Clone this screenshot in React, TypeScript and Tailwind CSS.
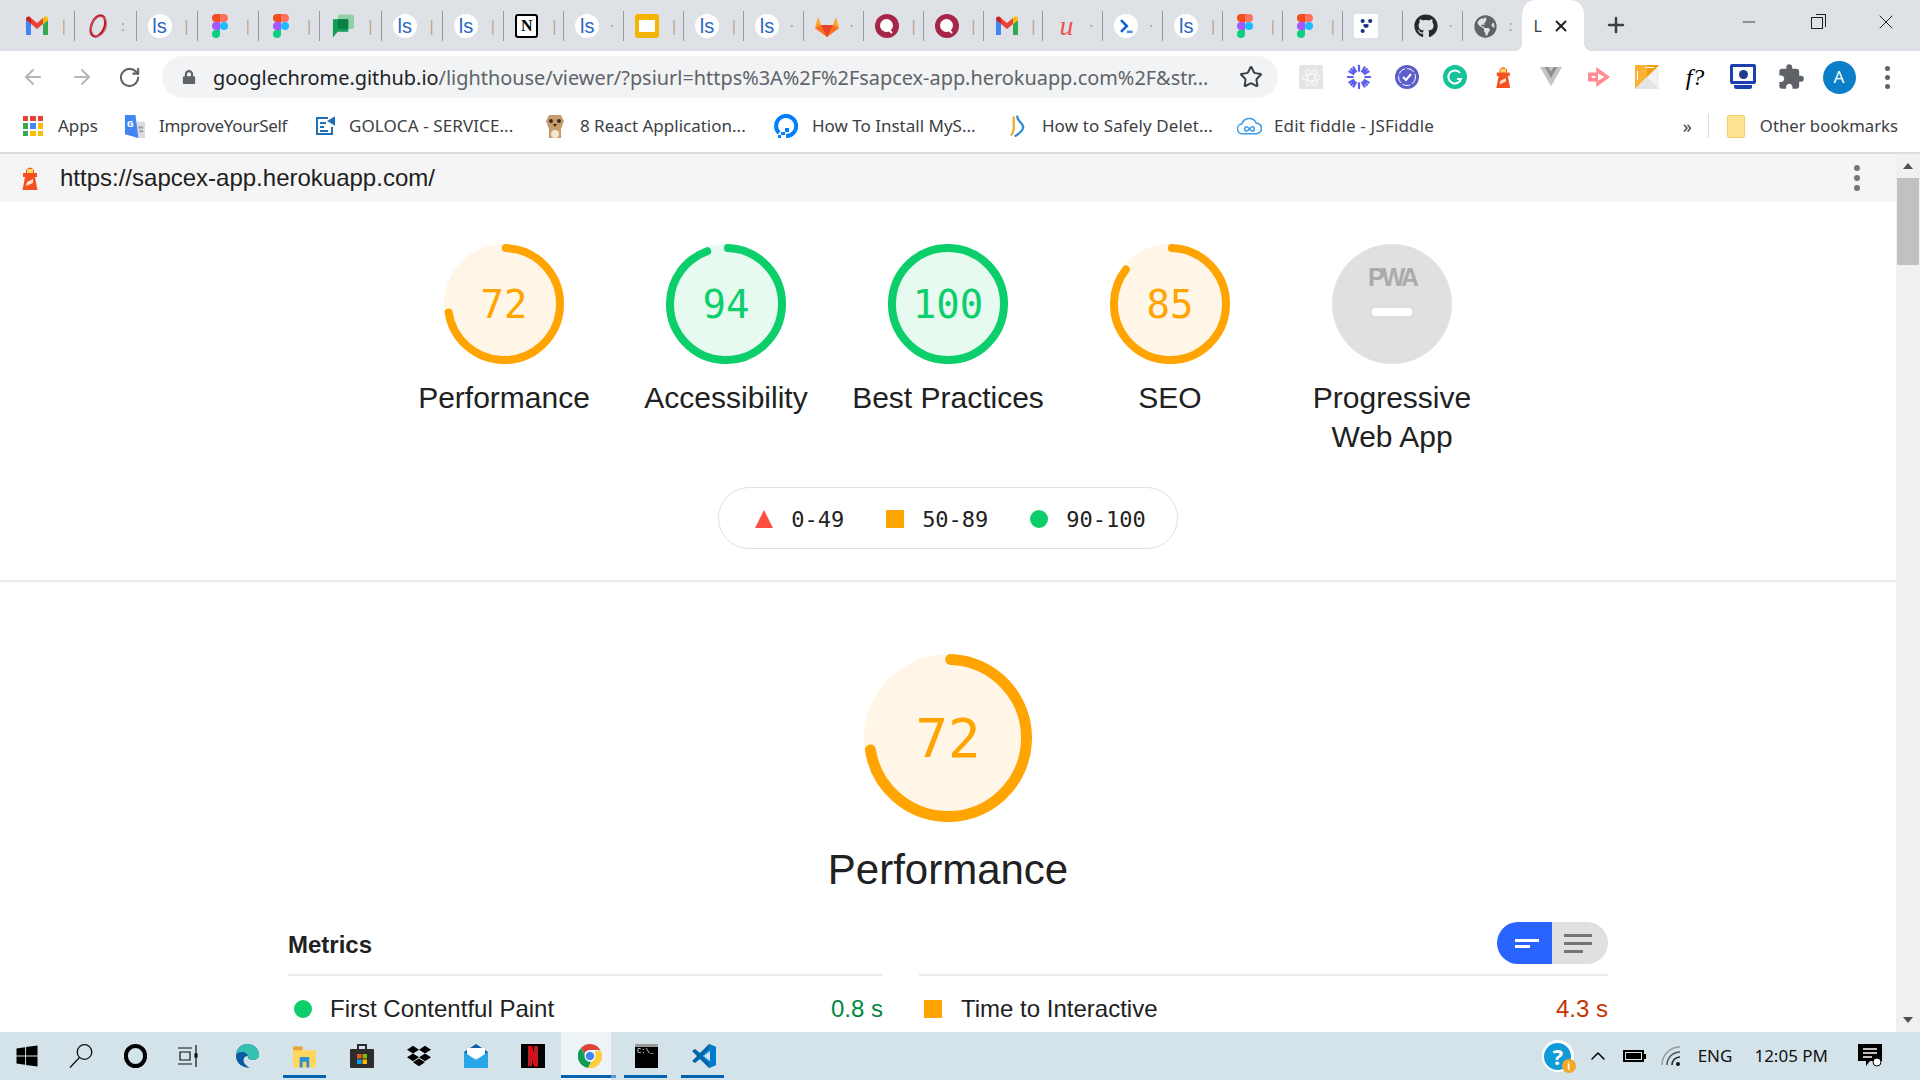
import { ArrowLeft, ArrowRight, ChevronUp, Minus, Plus, RotateCw, Star, X } from 'lucide-react';
import { FaDropbox, FaGithub, FaGlobeAmericas, FaLock, FaWindows } from 'react-icons/fa';
import { MdExtension } from 'react-icons/md';

const Gmail = () => (
  <svg viewBox="0 0 24 24" className="w-[24px] h-[24px]">
    <path fill="#4285f4" d="M1 21h5V10L1 6z" />
    <path fill="#34a853" d="M18 21h5V6l-5 4z" />
    <path fill="#ea4335" d="M6 10V4l6 5 6-5v6l-6 5z" />
    <path fill="#fbbc04" d="M18 4v6l5-4V5c0-2.500-3-3.500-5-1z" />
    <path fill="#c5221f" d="M1 6l5 4V4C4 1.500 1 2.500 1 5z" />
  </svg>
);

const Opera = () => (
  <svg viewBox="0 0 24 24" className="w-[24px] h-[24px]" fill="none">
    <ellipse cx="12" cy="12" rx="6.500" ry="11" transform="rotate(22 12 12)" stroke="#b71c2c" strokeWidth="2.400" />
    <ellipse cx="13" cy="12" rx="7.500" ry="10" transform="rotate(22 12 12)" stroke="#d9707a" strokeWidth="0.800" />
  </svg>
);

const Ls = () => (
  <div className="w-[24px] h-[24px] rounded-full bg-white flex items-center justify-center text-[20px] leading-none text-[#2b66c4] font-['Liberation_Sans',sans-serif]">
    ls
  </div>
);

const Figma = () => (
  <svg viewBox="0 0 16 24" className="w-[16px] h-[24px]">
    <path fill="#f24e1e" d="M4 0h4v8H4a4 4 0 0 1 0-8z" />
    <path fill="#ff7262" d="M8 0h4a4 4 0 0 1 0 8H8z" />
    <path fill="#a259ff" d="M4 8h4v8H4a4 4 0 0 1 0-8z" />
    <circle cx="12" cy="12" r="4" fill="#1abcfe" />
    <path fill="#0acf83" d="M4 16h4v4a4 4 0 1 1-4-4z" />
  </svg>
);

const Chat = () => (
  <svg viewBox="0 0 24 24" className="w-[23px] h-[24px]">
    <rect x="7" y="0" width="17" height="15" rx="2" fill="#8fd0a5" />
    <path fill="#0f9d58" d="M2 5h16v13H7l-5 6z" />
    <rect x="7" y="5" width="11" height="10" fill="#0b7f45" />
  </svg>
);

const Notion = () => (
  <div className="w-[23px] h-[24px] bg-white border-2 border-black rounded-[3px] flex items-center justify-center text-[16px] font-bold text-black leading-none font-['Liberation_Serif',serif]">
    N
  </div>
);

const Slides = () => (
  <div className="w-[24px] h-[24px] bg-[#f4b400] rounded-[3px] flex items-center justify-center">
    <div className="w-[16px] h-[12px] bg-white" />
  </div>
);

const Gitlab = () => (
  <svg viewBox="0 0 24 24" className="w-[24px] h-[24px]">
    <path fill="#fca326" d="M0 14L3 3l3 8h12l3-8 3 11-12 9z" />
    <path fill="#fc6d26" d="M6 11h12l-6 12zM0 14l6-3 6 12zM24 14l-6-3-6 12z" />
    <path fill="#e24329" d="M6 11h12l-6 12z" />
  </svg>
);

const Quora = () => (
  <svg viewBox="0 0 24 24" className="w-[24px] h-[24px]">
    <circle cx="12" cy="12" r="12" fill="#a8254a" />
    <circle cx="11.500" cy="11.500" r="6.500" fill="#fff" />
    <path d="M12 14l5 5" stroke="#fff" strokeWidth="2" />
  </svg>
);

const Udemy = () => (
  <div className="w-[24px] h-[24px] flex items-center justify-center text-[28px] italic leading-none text-[#ec5252] font-['Liberation_Serif',serif]">
    u
  </div>
);

const Prompt = () => (
  <div className="w-[24px] h-[24px] rounded-full bg-white flex items-center justify-center">
    <svg viewBox="0 0 24 24" className="w-[20px] h-[20px]" fill="none" strokeWidth="3">
      <path d="M6 5l7 7-7 7" stroke="#0b5fd0" />
      <path d="M13 19h7" stroke="#3f8ff0" />
    </svg>
  </div>
);

const DotsSquare = () => (
  <div className="w-[24px] h-[24px] bg-white rounded-[2px] flex items-center justify-center">
    <svg viewBox="0 0 24 24" className="w-[20px] h-[20px]" fill="#17347e">
      <circle cx="8" cy="6" r="2.500" />
      <circle cx="17" cy="6" r="2.500" />
      <rect x="9" y="10" width="6" height="3" />
      <circle cx="12" cy="12" r="2.500" />
      <circle cx="8" cy="18" r="2.500" />
    </svg>
  </div>
);

const Lighthouse = ({ size = 24 }: { size?: number }) => (
  <svg viewBox="0 0 20 26" width={(size * 20) / 26} height={size}>
    <path fill="#f4511e" d="M6 5Q10 0 14 5V8H6z" />
    <rect x="7" y="4" width="6" height="5" fill="#fdd663" />
    <path fill="#f4511e" d="M3 8h14v4h-2l2.500 13H2.500L5 12H3z" />
    <path fill="#ffe0d0" d="M7 17l6-3v4l-7 3z" />
  </svg>
);

const tabs = [
  { icon: <Gmail />, tail: '|' },
  { icon: <Opera />, tail: ':' },
  { icon: <Ls />, tail: '|' },
  { icon: <Figma />, tail: '|', pad: 'pl-[14px]' },
  { icon: <Figma />, tail: '|', pad: 'pl-[14px]' },
  { icon: <Chat />, tail: '|' },
  { icon: <Ls />, tail: '|' },
  { icon: <Ls />, tail: '|' },
  { icon: <Notion />, tail: '|' },
  { icon: <Ls />, tail: '·' },
  { icon: <Slides />, tail: '|' },
  { icon: <Ls />, tail: '|' },
  { icon: <Ls />, tail: '·' },
  { icon: <Gitlab />, tail: '·' },
  { icon: <Quora />, tail: '|' },
  { icon: <Quora />, tail: '|' },
  { icon: <Gmail />, tail: '|' },
  { icon: <Udemy />, tail: '·' },
  { icon: <Prompt />, tail: '·' },
  { icon: <Ls />, tail: '|' },
  { icon: <Figma />, tail: '|', pad: 'pl-[14px]' },
  { icon: <Figma />, tail: '|', pad: 'pl-[14px]' },
  { icon: <DotsSquare />, tail: '' },
  { icon: <FaGithub className="text-[24px] text-[#24292e]" />, tail: '·' },
  { icon: <FaGlobeAmericas className="text-[23px] text-[#5f6368]" />, tail: ':' },
];

const bookmarks = [
  {
    label: 'ImproveYourSelf',
    item: 'ml-[25px] gap-[13px]',
    text: 'w-[129px] tracking-[-0.3px]',
    icon: (
      <svg viewBox="0 0 24 24" className="w-[23px] h-[23px]">
        <path fill="#dadce0" d="M12 7h11v17H14z" />
        <path fill="#9aa0a6" d="M16 12h5v2h-5zM17 16h4v2h-4z" />
        <path fill="#4285f4" d="M2 0h11l3 24-14-4z" />
        <text x="4" y="13" fontSize="10" fontWeight="700" fill="#fff">G</text>
      </svg>
    ),
  },
  {
    label: 'GOLOCA - SERVICE...',
    item: 'ml-[27px] gap-[14px]',
    text: 'w-[165px] tracking-[0.1px]',
    icon: (
      <svg viewBox="0 0 20 20" className="w-[20px] h-[20px]" fill="none" stroke="#1f6fb5" strokeWidth="2">
        <path d="M13 2H2v16h15v-7" />
        <path d="M5 7h6M5 11h4M5 15h8" />
        <path d="M19 2l-5 3 5 3z" fill="#1f6fb5" />
      </svg>
    ),
  },
  {
    label: '8 React Application...',
    item: 'ml-[29px] gap-[13px]',
    text: 'w-[166px]',
    icon: (
      <svg viewBox="0 0 24 24" className="w-[24px] h-[24px]">
        <path fill="#c69c6d" d="M6 1h12l3 6-3 8v9H6v-9L3 7z" />
        <ellipse cx="12" cy="20" rx="4" ry="4" fill="#f5e6d0" />
        <circle cx="8" cy="7" r="2" fill="#3a2a1a" />
        <circle cx="16" cy="7" r="2" fill="#3a2a1a" />
        <path fill="#3a2a1a" d="M10 10h4l-2 3z" />
      </svg>
    ),
  },
  {
    label: 'How To Install MyS...',
    item: 'ml-[28px] gap-[14px]',
    text: 'w-[163px]',
    icon: (
      <svg viewBox="0 0 24 24" className="w-[24px] h-[24px]" fill="none">
        <path d="M5 19A10 10 0 1 1 12 22" stroke="#0080ff" strokeWidth="4" />
        <path fill="#0080ff" d="M11 14h4v4h-4zM7 18h4v3H7zM4 21h3v3H4z" />
      </svg>
    ),
  },
  {
    label: 'How to Safely Delet...',
    item: 'ml-[34px] gap-[16px]',
    text: 'w-[170px] tracking-[0.1px]',
    icon: (
      <svg viewBox="0 0 18 24" className="w-[17px] h-[24px]" fill="none" strokeWidth="2.400">
        <path d="M9 1c-2 5 7 8 6 13-.6 3-4 6-9 9" stroke="#2a8bd8" />
        <path d="M5 2v13c0 3-1 5-3 7" stroke="#f0a830" />
      </svg>
    ),
  },
  {
    label: 'Edit fiddle - JSFiddle',
    item: 'ml-[25px] gap-[12px]',
    text: 'w-[159px] tracking-[0.17px]',
    icon: (
      <svg viewBox="0 0 26 20" className="w-[25px] h-[20px]" fill="none" stroke="#3d9be9" strokeWidth="1.600">
        <path d="M6 18a5 5 0 0 1-1-10 8 8 0 0 1 15-1 5.500 5.500 0 0 1 0 11z" />
        <path d="M13 13c-2-3-5-3-5 0s3 3 5 0 5-3 5 0-3 3-5 0z" />
      </svg>
    ),
  },
];

const extensions = [
  <div key="react" className="w-[24px] h-[24px] bg-[#e4e4e4] rounded-[2px] flex items-center justify-center">
    <svg viewBox="0 0 24 24" className="w-[21px] h-[21px]" fill="none" stroke="#f5f5f5" strokeWidth="1.500">
      <ellipse cx="12" cy="12" rx="10" ry="4" />
      <ellipse cx="12" cy="12" rx="10" ry="4" transform="rotate(60 12 12)" />
      <ellipse cx="12" cy="12" rx="10" ry="4" transform="rotate(120 12 12)" />
    </svg>
  </div>,
  <svg key="snow" viewBox="0 0 24 24" className="w-[24px] h-[24px]" stroke="#5b5fef" strokeWidth="2.200">
    <path d="M12 0v24M0 12h24M3.500 3.500l17 17M20.500 3.500l-17 17M6 1.600l12 20.800M18 1.600L6 22.400M1.600 6l20.800 12M22.400 6L1.600 18" />
    <circle cx="12" cy="12" r="5.500" fill="#fff" stroke="none" />
  </svg>,
  <svg key="check" viewBox="0 0 24 24" className="w-[24px] h-[24px]" fill="none">
    <circle cx="12" cy="12" r="12" fill="#5c5fc9" />
    <circle cx="12" cy="12" r="8.500" stroke="#fff" strokeWidth="1" strokeDasharray="8 2" />
    <path d="M8 12l3 3 5-6" stroke="#fff" strokeWidth="2" />
  </svg>,
  <svg key="g" viewBox="0 0 24 24" className="w-[24px] h-[24px]" fill="none">
    <circle cx="12" cy="12" r="12" fill="#15c39a" />
    <path d="M17 8a6.500 6.500 0 1 0 1 6h-4" stroke="#fff" strokeWidth="2" />
    <path d="M17 13v4" stroke="#fff" strokeWidth="2" />
  </svg>,
  <Lighthouse key="lh" size={24} />,
  <svg key="vue" viewBox="0 0 24 24" className="w-[24px] h-[22px]">
    <path fill="#c4c4c4" d="M0 1h24L12 22z" />
    <path fill="#8f8f8f" d="M5 1h14l-7 12z" />
    <path fill="#c4c4c4" d="M9 1h6l-3 5z" />
  </svg>,
  <svg key="arrow" viewBox="0 0 24 24" className="w-[24px] h-[22px]">
    <path fill="#ff8a8f" d="M0 7h9V1l15 11-15 11v-6H0z" />
    <path fill="#fff" d="M11 8l7 4-7 4zM4 11h4v2H4z" />
  </svg>,
  <svg key="yellow" viewBox="0 0 24 24" className="w-[24px] h-[24px]">
    <rect width="24" height="24" rx="1" fill="#f2f2f2" />
    <path fill="#f9b233" d="M0 0h24L0 24z" />
    <path fill="#f59e0b" d="M12 12L24 0H12z" />
    <path fill="#e3e3e3" d="M24 24H0l12-12z" />
    <path fill="#fff" d="M10 2h9v1h-9zM2 6h1v9H2z" />
  </svg>,
  <div key="f" className="text-[24px] italic leading-none text-black font-['Liberation_Serif',serif]">f?</div>,
  <div key="screen" className="w-[26px] h-[26px] flex flex-col items-center">
    <div className="w-[26px] h-[20px] rounded-[2px] border-[3px] border-[#1e40af] flex items-center justify-center">
      <div className="w-[9px] h-[9px] rounded-full bg-[#1e3a8a]" />
    </div>
    <div className="w-[18px] h-[4px] mt-[1px] rounded-b-[2px] bg-[#1e40af]" />
  </div>,
  <MdExtension key="puzzle" className="text-[28px] text-[#5f6368]" />,
  <div key="avatar" className="w-[33px] h-[33px] rounded-full bg-[#0b7fc7] flex items-center justify-center text-[17px] text-white font-['Noto_Sans',sans-serif]">
    A
  </div>,
  <div key="dots" className="flex flex-col gap-[4px]">
    <div className="w-[5px] h-[5px] rounded-full bg-[#5f6368]" />
    <div className="w-[5px] h-[5px] rounded-full bg-[#5f6368]" />
    <div className="w-[5px] h-[5px] rounded-full bg-[#5f6368]" />
  </div>,
];

const Gauge = ({ score, size, stroke, text, color, fill }: { score: number; size: number; stroke: number; text: string; color: string; fill: string }) => {
  const r = (size - stroke) / 2;
  return (
    <div className="relative shrink-0" style={{ width: size, height: size }}>
      <svg viewBox={`0 0 ${size} ${size}`} width={size} height={size}>
        <circle cx={size / 2} cy={size / 2} r={size / 2} fill={fill} />
        <circle
          cx={size / 2}
          cy={size / 2}
          r={r}
          fill="none"
          stroke={color}
          strokeWidth={stroke}
          strokeLinecap="round"
          pathLength={100}
          strokeDasharray={`${score} 100`}
          transform={`rotate(-88 ${size / 2} ${size / 2})`}
        />
      </svg>
      <div className={`absolute inset-0 flex items-center justify-center font-['DejaVu_Sans_Mono',monospace] ${text}`} style={{ color }}>
        {score}
      </div>
    </div>
  );
};

const scores = [
  { label: 'Performance', score: 72, color: '#ffa400', fill: '#fff6e8' },
  { label: 'Accessibility', score: 94, color: '#0cce6b', fill: '#e7faf0' },
  { label: 'Best Practices', score: 100, color: '#0cce6b', fill: '#e7faf0' },
  { label: 'SEO', score: 85, color: '#ffa400', fill: '#fff6e8' },
];

const Chrome = () => (
  <svg viewBox="0 0 24 24" className="w-[24px] h-[24px]">
    <path fill="#db4437" d="M12 0a12 12 0 0 1 10.400 6H12a6 6 0 0 0-5.500 3.500L3 4a12 12 0 0 1 9-4z" />
    <path fill="#0f9d58" d="M3 4l5 8.500A5 5 0 0 0 13 18l-3 6A12 12 0 0 1 3 4z" />
    <path fill="#ffcd40" d="M22.400 6A12 12 0 0 1 10 24l5-8.500A5 5 0 0 0 16 8z" />
    <circle cx="12" cy="12" r="5.500" fill="#fff" />
    <circle cx="12" cy="12" r="4.300" fill="#4285f4" />
  </svg>
);

const taskIcons = [
  { key: 'explorer', bar: true, icon: (
    <svg viewBox="0 0 24 24" className="w-[23px] h-[24px]">
      <path fill="#e8a33d" d="M0 2h10v6H0z" />
      <path fill="#ffd75e" d="M0 6h24v18H0z" />
      <path fill="#2d8fd5" d="M7 13h10v11h-3v-6h-4v6H7z" />
    </svg>
  ) },
  { key: 'store', bar: false, icon: (
    <svg viewBox="0 0 24 24" className="w-[24px] h-[24px]">
      <path fill="none" stroke="#2d2d2d" strokeWidth="2" d="M8 6V1h8v5" />
      <rect x="0" y="5" width="24" height="19" rx="1" fill="#2d2d2d" />
      <rect x="7" y="10" width="4.500" height="4.500" fill="#e8552d" />
      <rect x="12.500" y="10" width="4.500" height="4.500" fill="#7fba00" />
      <rect x="7" y="15.500" width="4.500" height="4.500" fill="#00a4ef" />
      <rect x="12.500" y="15.500" width="4.500" height="4.500" fill="#ffb900" />
    </svg>
  ) },
  { key: 'dropbox', bar: false, icon: <FaDropbox className="text-[24px] text-black" /> },
  { key: 'mail', bar: false, icon: (
    <svg viewBox="0 0 24 24" className="w-[24px] h-[24px]">
      <path fill="#0a5fa8" d="M12 0l12 8v3H0V8z" />
      <rect x="3" y="4" width="18" height="10" fill="#fff" />
      <path fill="#28a8ea" d="M0 8l12 8 12-8v16H0z" />
    </svg>
  ) },
  { key: 'netflix', bar: false, icon: (
    <svg viewBox="0 0 24 24" className="w-[24px] h-[24px]">
      <rect width="24" height="24" fill="#000" />
      <path fill="#b81d24" d="M7 2h4v20l-4 .5z M13 2h4v20.500l-4-.5z" />
      <path fill="#e50914" d="M7 2h4l6 20.500h-4z" />
    </svg>
  ) },
];

const Tray = () => (
  <div className="ml-auto flex items-center h-full text-[17px] text-[#111] font-['Noto_Sans',sans-serif]">
    <div className="relative w-[32px] h-[32px] rounded-full bg-white flex items-center justify-center">
      <div className="w-[27px] h-[27px] rounded-full bg-[#0f9bd7] flex items-center justify-center text-[22px] font-bold text-white leading-none">?</div>
      <div className="absolute right-[-2px] bottom-[-1px] w-[14px] h-[14px] rounded-full bg-[#f5a623] flex items-center justify-center text-[10px] font-bold leading-none text-white">i</div>
    </div>
    <ChevronUp className="ml-[12px] w-[24px] h-[24px] text-black" strokeWidth={1.500} />
    <div className="ml-[13px] flex items-center">
      <div className="w-[21px] h-[12px] border-2 border-black p-[1px]">
        <div className="w-full h-full bg-black" />
      </div>
      <div className="w-[2px] h-[5px] bg-black" />
    </div>
    <svg viewBox="0 0 20 20" className="ml-[15px] w-[20px] h-[20px]" fill="none" strokeWidth="1.500">
      <path d="M1 19A18 18 0 0 1 19 1" stroke="#9a9a9a" />
      <path d="M6 19A13 13 0 0 1 19 6" stroke="#555" />
      <path d="M11 19a8 8 0 0 1 8-8" stroke="#222" />
      <circle cx="17" cy="18" r="2" fill="#111" />
    </svg>
    <span className="ml-[17px]">ENG</span>
    <span className="ml-[22px]">12:05 PM</span>
    <svg viewBox="0 0 24 24" className="ml-[30px] mr-[38px] w-[24px] h-[24px]">
      <path fill="#000" d="M0 0h24v17H12l-4 5v-5H0z" />
      <path stroke="#fff" strokeWidth="1.500" d="M5 5h14M5 9h14M5 13h9" />
      <circle cx="19" cy="18" r="4" fill="#fff" stroke="#000" />
    </svg>
  </div>
);

export default function App() {
  return (
    <div className="w-[1920px] h-[1080px] overflow-hidden flex flex-col bg-white font-['Liberation_Sans',Arial,sans-serif]">
      {/* tab strip */}
      <div className="h-[51px] shrink-0 flex bg-[#dee1e6] pl-[14px]">
        {tabs.map((tab, i) => (
          <div key={i} className={`shrink-0 h-[30px] mt-[11px] flex items-center border-r border-[#9a9a9a] ${i < 8 ? 'w-[61.3px]' : 'w-[59.9px]'}`}>
            <div className={`flex items-center w-[46px] ${tab.pad || 'pl-[11px]'}`}>{tab.icon}</div>
            <span className="text-[14px] leading-none text-[#b59a7a] font-['Noto_Sans',sans-serif]">{tab.tail}</span>
          </div>
        ))}
        <div className="relative w-[62px] shrink-0 h-[51px] ml-[-1px] bg-white rounded-t-[14px] flex items-center pl-[12px] gap-[10px] text-[16px] text-[#3c4043] font-['Noto_Sans',sans-serif]">
          <span>L</span>
          <X className="w-[18px] h-[18px] text-[#202124]" strokeWidth={2.500} />
          <div className="absolute left-[-8px] bottom-0 w-[8px] h-[8px] bg-[radial-gradient(circle_at_0_0,transparent_8px,white_8px)]" />
          <div className="absolute right-[-8px] bottom-0 w-[8px] h-[8px] bg-[radial-gradient(circle_at_100%_0,transparent_8px,white_8px)]" />
        </div>
        <div className="ml-[20px] h-[49px] flex items-center">
          <Plus className="w-[24px] h-[24px] text-[#3c4043]" strokeWidth={2.500} />
        </div>
        <div className="ml-auto flex h-[44px] text-[#222]">
          <div className="w-[68px] pr-[3px] flex items-center justify-center"><Minus className="w-[20px] h-[20px]" strokeWidth={1} /></div>
          <div className="w-[68px] flex items-center justify-center">
            <div className="relative mr-[3px] mt-[2px] w-[12px] h-[12px] border border-[#222] bg-[#dee1e6]">
              <div className="absolute right-[-4px] top-[-4px] w-[10px] h-[13px] border-t border-r border-[#222]" />
            </div>
          </div>
          <div className="w-[68px] flex items-center justify-center"><X className="w-[24px] h-[24px]" strokeWidth={1} /></div>
        </div>
      </div>

      {/* toolbar */}
      <div className="h-[51px] shrink-0 flex items-center pl-[8px] pt-[1px] bg-white">
        <div className="w-[49px] flex justify-center"><ArrowLeft className="w-[24px] h-[24px] text-[#b4b6b9]" strokeWidth={2} /></div>
        <div className="w-[49px] flex justify-center"><ArrowRight className="w-[24px] h-[24px] text-[#b4b6b9]" strokeWidth={2} /></div>
        <div className="w-[49px] flex justify-center"><RotateCw className="w-[23px] h-[23px] text-[#5f6368] -ml-[2px]" strokeWidth={2.200} /></div>
        <div className="ml-[7px] w-[1116px] h-[42px] rounded-full bg-[#f1f3f4] flex items-center pl-[20px] pr-[15px]">
          <FaLock className="text-[14px] text-[#5f6368]" />
          <div className="ml-[17px] pt-[2px] flex-1 text-[19.9px] text-[#5f6368] whitespace-nowrap overflow-hidden font-['Noto_Sans',sans-serif]">
            <span className="text-[#202124]">googlechrome.github.io</span>/lighthouse/viewer/?psiurl=https%3A%2F%2Fsapcex-app.herokuapp.com%2F&str...
          </div>
          <Star className="w-[24px] h-[24px] text-[#3c4043]" strokeWidth={2} />
        </div>
        <div className="ml-[9px] flex">
          {extensions.map((ext, i) => (
            <div key={i} className="w-[48px] flex items-center justify-center">{ext}</div>
          ))}
        </div>
      </div>

      {/* bookmarks */}
      <div className="h-[52px] shrink-0 flex items-center pl-[23px] pr-[22px] pb-[2px] border-b-2 border-[#dadce0] text-[17px] text-[#3c4043] font-['Noto_Sans',sans-serif]">
        <div className="grid grid-cols-3 gap-[2px] w-[20px] h-[20px]">
          <div className="bg-[#ea4335]" /><div className="bg-[#ea4335]" /><div className="bg-[#ea4335]" />
          <div className="bg-[#34a853]" /><div className="bg-[#4285f4]" /><div className="bg-[#fbbc04]" />
          <div className="bg-[#34a853]" /><div className="bg-[#fbbc04]" /><div className="bg-[#fbbc04]" />
        </div>
        <span className="ml-[15px]">Apps</span>
        {bookmarks.map(b => (
          <div key={b.label} className={`flex items-center whitespace-nowrap ${b.item}`}>
            {b.icon}
            <span className={b.text}>{b.label}</span>
          </div>
        ))}
        <div className="ml-auto flex items-center">
          <span className="text-[18px]">»</span>
          <div className="ml-[16px] w-px h-[24px] bg-[#dadce0]" />
          <div className="ml-[18px] w-[18px] h-[23px] rounded-[2px] bg-[#fde293] border border-[#f5cf6b]" />
          <span className="ml-[15px] text-[16.7px]">Other bookmarks</span>
        </div>
      </div>

      {/* page */}
      <div className="flex-1 min-h-0 flex">
        <div className="flex-1 min-w-0 flex flex-col overflow-hidden">
          <div className="h-[48px] shrink-0 bg-[#f5f5f5] flex items-center pl-[20px] pr-[36px]">
            <Lighthouse size={26} />
            <span className="ml-[20px] text-[24px] text-[#212121]">https://sapcex-app.herokuapp.com/</span>
            <div className="ml-auto flex flex-col gap-[4px]">
              <div className="w-[6px] h-[6px] rounded-full bg-[#757575]" />
              <div className="w-[6px] h-[6px] rounded-full bg-[#757575]" />
              <div className="w-[6px] h-[6px] rounded-full bg-[#757575]" />
            </div>
          </div>

          <div className="flex justify-center pt-[42px] text-[30px] leading-[39px] text-[#212121]">
            {scores.map(s => (
              <div key={s.label} className="w-[222px] flex flex-col items-center">
                <Gauge score={s.score} size={120} stroke={8} text="text-[39px]" color={s.color} fill={s.fill} />
                <div className="mt-[14px] text-center">{s.label}</div>
              </div>
            ))}
            <div className="w-[222px] flex flex-col items-center">
              <div className="w-[120px] h-[120px] rounded-full bg-[#e0e0e0] flex flex-col items-center pt-[19px]">
                <span className="text-[25px] leading-[28px] font-bold tracking-[-3px] text-[#ababab]">PWA</span>
                <div className="mt-[17px] w-[40px] h-[8px] rounded-full bg-white" />
              </div>
              <div className="mt-[14px] text-center">Progressive<br />Web App</div>
            </div>
          </div>

          <div className="self-center mt-[31px] h-[62px] flex items-center pl-[36px] pr-[31px] pt-[2px] gap-[42px] rounded-full border border-[#e0e0e0] text-[22px] text-[#212121] font-['DejaVu_Sans_Mono',monospace]">
            <div className="flex items-center gap-[18px]">
              <svg viewBox="0 0 18 18" className="w-[18px] h-[18px]"><path fill="#ff4e42" d="M9 0l9 18H0z" /></svg>
              <span>0-49</span>
            </div>
            <div className="flex items-center gap-[18px]">
              <div className="w-[18px] h-[18px] bg-[#ffa400]" />
              <span>50-89</span>
            </div>
            <div className="flex items-center gap-[18px]">
              <div className="w-[18px] h-[18px] rounded-full bg-[#0cce6b]" />
              <span>90-100</span>
            </div>
          </div>

          <div className="mt-[31px] h-[2px] shrink-0 bg-[#ebebeb]" />

          <div className="flex flex-col items-center pt-[72px]">
            <Gauge score={72} size={168} stroke={11} text="text-[54px]" color="#ffa400" fill="#fff6e8" />
            <div className="mt-[24px] text-[42px] leading-[48px] text-[#212121]">Performance</div>
          </div>

          <div className="w-[1320px] self-center mt-[28px]">
            <div className="flex items-center justify-between h-[42px]">
              <span className="pt-[3px] text-[24px] font-bold text-[#212121]">Metrics</span>
              <div className="flex h-[42px]">
                <div className="w-[55px] rounded-l-full bg-[#2a64ff] flex flex-col justify-center items-start pl-[18px] gap-[3px]">
                  <div className="w-[24px] h-[3px] bg-white" />
                  <div className="w-[15px] h-[3px] bg-white" />
                </div>
                <div className="w-[56px] rounded-r-full bg-[#e0e0e0] flex flex-col justify-center items-start pl-[12px] gap-[5px]">
                  <div className="w-[28px] h-[3px] bg-[#757575]" />
                  <div className="w-[28px] h-[3px] bg-[#757575]" />
                  <div className="w-[19px] h-[3px] bg-[#757575]" />
                </div>
              </div>
            </div>
            <div className="mt-[10px] flex gap-[36px] text-[24px] text-[#212121]">
              <div className="w-[595px] border-t-2 border-[#ebebeb] pt-[15px] flex items-center">
                <div className="ml-[6px] w-[18px] h-[18px] rounded-full bg-[#0cce6b]" />
                <span className="ml-[18px]">First Contentful Paint</span>
                <span className="ml-auto text-[#018642]">0.8 s</span>
              </div>
              <div className="flex-1 border-t-2 border-[#ebebeb] pt-[15px] flex items-center">
                <div className="ml-[5px] w-[18px] h-[18px] bg-[#ffa400]" />
                <span className="ml-[19px]">Time to Interactive</span>
                <span className="ml-auto text-[#c33300]">4.3 s</span>
              </div>
            </div>
          </div>
        </div>

        {/* scrollbar */}
        <div className="w-[24px] shrink-0 bg-[#f1f1f1] flex flex-col items-center">
          <svg viewBox="0 0 10 6" className="mt-[9px] w-[10px] h-[6px]"><path fill="#505050" d="M5 0l5 6H0z" /></svg>
          <div className="mt-[9px] w-[22px] h-[87px] bg-[#c1c1c1]" />
          <svg viewBox="0 0 10 6" className="mt-auto mb-[9px] w-[10px] h-[6px]"><path fill="#505050" d="M5 6L0 0h10z" /></svg>
        </div>
      </div>

      {/* taskbar */}
      <div className="h-[48px] shrink-0 flex items-center bg-[#d4e3ea]">
        <div className="w-[54px] flex justify-center"><FaWindows className="text-[24px] text-black" /></div>
        <div className="w-[54px] flex justify-center">
          <svg viewBox="0 0 24 24" className="w-[24px] h-[24px]" fill="none" stroke="#111" strokeWidth="1.300">
            <circle cx="15.500" cy="8" r="7.300" />
            <path d="M10.500 13.500L1 23.500" />
          </svg>
        </div>
        <div className="w-[54px] flex justify-center"><div className="w-[23px] h-[24px] rounded-full border-[4px] border-black" /></div>
        <div className="w-[54px] flex justify-center">
          <svg viewBox="0 0 24 24" className="w-[24px] h-[24px]" fill="none" stroke="#111" strokeWidth="1.200">
            <path d="M1 4h14M1 20h14M3 8h10v8H3zM19 1v22" />
            <rect x="18" y="10" width="2" height="3" fill="#111" />
          </svg>
        </div>
        <div className="w-[58px] flex justify-center ml-[2px]">
          <svg viewBox="0 0 24 24" className="w-[24px] h-[24px]">
            <path fill="#0c59a4" d="M1 12C1 5 6 0 12 0c7 0 12 5 12 11 0 3-3 5-6 5-4 0-6-2-5-4-5 0-6 6-2 9 1 1 3 3 5 3C8 24 1 20 1 12z" />
            <path fill="#35c1b0" d="M1 11C2 5 7 0 12 0c7 0 12 5 12 11 0 3-3 5-6 5-3 0-5-1-5-3 0-3-3-5-6-5-3 0-5 1-6 3z" />
          </svg>
        </div>
        {taskIcons.map(t => (
          <div key={t.key} className="relative w-[57px] h-full flex items-center justify-center">
            {t.icon}
            {t.bar && <div className="absolute left-[7px] bottom-[2px] w-[43px] h-[3px] bg-[#0063b1]" />}
          </div>
        ))}
        <div className="relative w-[57px] h-full flex items-center justify-center">
          <div className="absolute left-0 top-0 bottom-0 w-[50px] bg-[#edf3f6]" />
          <div className="relative"><Chrome /></div>
          <div className="absolute left-0 bottom-[2px] w-[50px] h-[3px] bg-[#0063b1]" />
          <div className="absolute left-[50px] bottom-[2px] w-[5px] h-[3px] bg-[#5b9bd0]" />
        </div>
        <div className="relative w-[57px] h-full flex items-center justify-center">
          <div className="w-[23px] h-[24px] bg-black border-t-[3px] border-[#9a9a9a] text-[7px] leading-[8px] text-white pl-[2px] font-['Liberation_Mono',monospace]">C:\_</div>
          <div className="absolute left-[6px] bottom-[2px] w-[43px] h-[3px] bg-[#0063b1]" />
        </div>
        <div className="relative w-[57px] h-full flex items-center justify-center">
          <svg viewBox="0 0 24 24" className="w-[24px] h-[24px]">
            <path fill="#0065a9" d="M17 0l7 3v18l-7 3-9-9-5 4-3-2 5-5-5-5 3-2 5 4z" />
            <path fill="#1f9cf0" d="M17 6v12l-7-6z" />
            <path fill="#007acc" d="M17 0l7 3v18l-7 3z" />
            <path fill="#d4e3ea" d="M18 7l-6 5 6 5z" />
          </svg>
          <div className="absolute left-[6px] bottom-[2px] w-[43px] h-[3px] bg-[#0063b1]" />
        </div>
        <Tray />
      </div>
    </div>
  );
}
